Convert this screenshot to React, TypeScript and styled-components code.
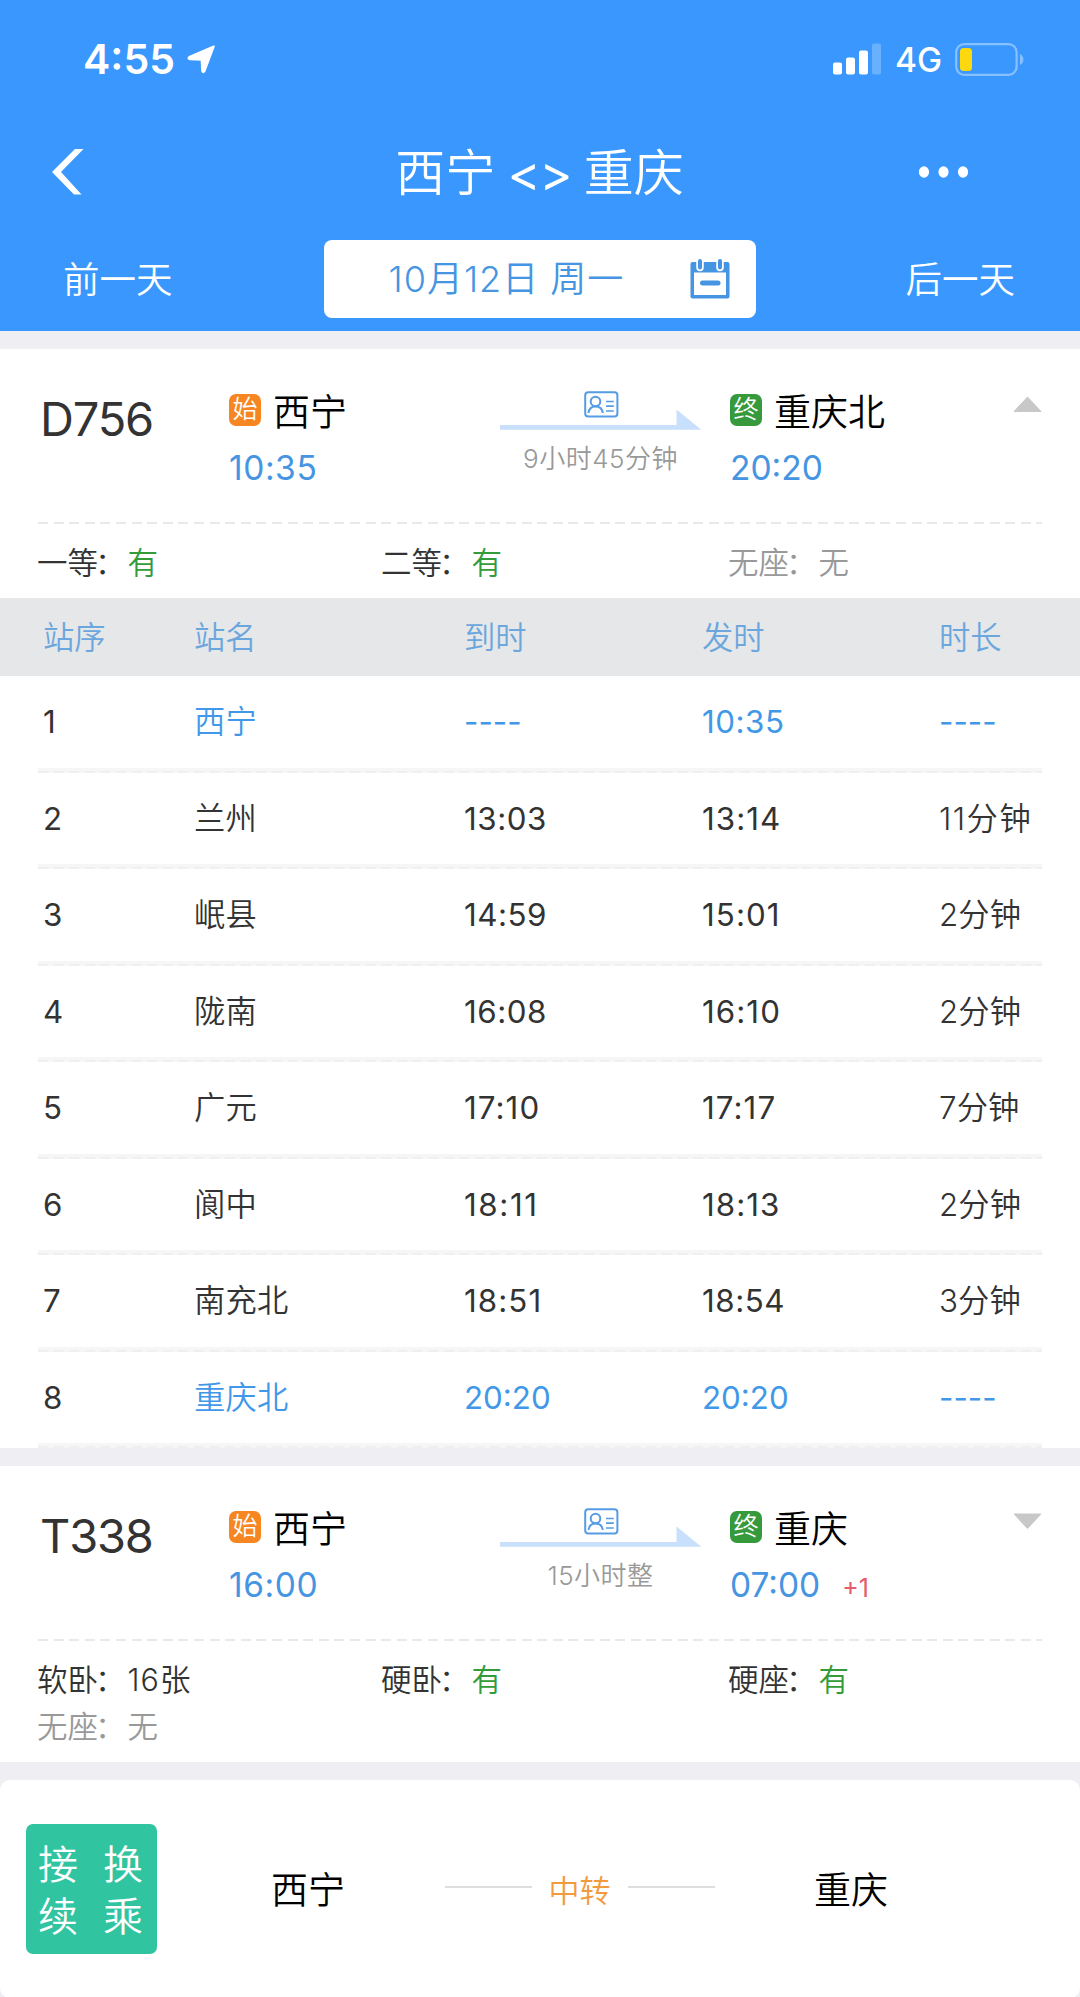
import React from 'react';
import styled, { createGlobalStyle } from 'styled-components';

const GlobalStyle = createGlobalStyle`
  * { box-sizing: border-box; }
  body {
    margin: 0;
    background: #efeff3;
    font-family: Inter, "Noto Sans CJK SC", sans-serif;
    color: #333;
  }
`;

const Screen = styled.div`
  width: 1080px;
  height: 1997px;
  overflow: hidden;
  display: flex;
  flex-direction: column;
  background: #efeff3;
  white-space: nowrap;
`;

const Header = styled.header`
  height: 331px;
  flex: none;
  background: #3997fd;
  color: #fff;
`;

const StatusBar = styled.div`
  height: 118px;
  padding: 0 56px 0 83px;
  display: flex;
  justify-content: space-between;
  align-items: center;
`;

const StatusGroup = styled.div<{ $gap: number }>`
  display: flex;
  align-items: center;
  gap: ${(p) => p.$gap}px;
`;

const Clock = styled.span`
  font-size: 41px;
  font-weight: 580;
  line-height: 48px;
`;

const Network = styled.span`
  width: 47px;
  font-size: 33.5px;
  font-weight: 460;
  line-height: 40px;
  padding-top: 2px;
`;

const NavBar = styled.div`
  height: 108px;
  padding: 0 112px 0 52px;
  display: grid;
  grid-template-columns: 100px 1fr 49px;
  align-items: center;
`;

const Title = styled.h1`
  margin: 0;
  padding: 2px 0 0 8px;
  text-align: center;
  font-size: 50px;
  font-weight: 350;
  line-height: 60px;
`;

const Angle = styled.span`
  margin: 0 -2px;
  font-size: 50px;
  font-weight: 400;
  letter-spacing: -1px;
`;

const DateBar = styled.div`
  height: 105px;
  padding: 14px 65px 0 63px;
  display: flex;
  align-items: flex-start;
  justify-content: space-between;
`;

const DayLink = styled.span`
  font-size: 36.5px;
  font-weight: 350;
  line-height: 80px;
`;

const DateBox = styled.div`
  width: 432px;
  height: 78px;
  margin-left: 1px;
  padding: 0 26px 0 65px;
  border-radius: 8px;
  background: #fff;
  color: #4695e2;
  font-size: 36px;
  font-weight: 360;
  letter-spacing: 1px;
  line-height: 78px;
  display: flex;
  align-items: center;
  justify-content: space-between;
`;

const Card = styled.section`
  margin-top: 18px;
  flex: none;
  background: #fff;
`;

const TrainHead = styled.div`
  height: 173px;
  padding: 40px 38px 0 40px;
  display: grid;
  grid-template-columns: 189px 271px 230px 1fr 29px;
`;

const TrainNo = styled.div`
  padding-top: 4px;
  font-size: 47px;
  line-height: 52px;
  letter-spacing: -1.2px;
`;

const Stop = styled.div`
  display: flex;
  flex-direction: column;
`;

const StopName = styled.div`
  display: flex;
  align-items: center;
  gap: 12px;
  height: 44px;
  padding-top: 3px;
  color: #000;
  font-size: 37px;
  font-weight: 350;
  line-height: 44px;
`;

const Badge = styled.span<{ $color: string }>`
  width: 32px;
  height: 32px;
  margin-top: -6px;
  border-radius: 7px;
  background: ${(p) => p.$color};
  color: #fff;
  font-size: 25px;
  line-height: 31px;
  text-align: center;
`;

const StopTime = styled.div`
  height: 44px;
  margin-top: 13px;
  display: flex;
  align-items: baseline;
  gap: 22px;
  color: #4695e2;
  font-size: 33.5px;
  line-height: 44px;
`;

/* Evens out the narrow figure "1" against the other digits. */
const Figures = styled.span<{ $tracking: number; $latin: boolean }>`
  letter-spacing: ${(p) => p.$tracking}em;
  font-weight: ${(p) => (p.$latin ? 400 : 'inherit')};
`;

const NextDay = styled.span`
  color: #e65c6c;
  font-size: 25px;
`;

const Route = styled.div`
  width: 201px;
  padding-top: 2px;
  display: flex;
  flex-direction: column;
  align-items: center;
`;

const Duration = styled.div`
  margin-top: 11px;
  font-size: 26px;
  font-weight: 360;
  letter-spacing: 0.5px;
  line-height: 34px;
  color: #999;
`;

const CaretSlot = styled.div`
  padding-top: 7px;
`;

const Dashes = styled.div`
  height: 2px;
  margin: 0 38px;
  background: repeating-linear-gradient(90deg, #e9e9e9 0 10px, transparent 10px 15.6px);
`;

const Seats = styled.div`
  padding: 15px 0 12px 37px;
  display: grid;
  grid-template-columns: 344px 347px 1fr;
  grid-auto-rows: 47px;
  font-size: 30.5px;
  font-weight: 350;
  line-height: 47px;
`;

const Seat = styled.div<{ $muted: boolean }>`
  color: ${(p) => (p.$muted ? '#999' : '#333')};
`;

const Colon = styled.span`
  margin: 0 2px 0 -3px;
`;

const Available = styled.span`
  color: #349b3a;
`;

const gridColumns = '151px 270px 238px 237px 1fr';

const TableHead = styled.div`
  height: 78px;
  padding-left: 43px;
  display: grid;
  grid-template-columns: ${gridColumns};
  background: #e6e7e9;
  color: #6ba6dd;
  font-size: 31.3px;
  font-weight: 350;
  line-height: 80px;
`;

const TableRow = styled.div`
  height: 96.5px;
  padding: 0 38px;
  line-height: 93px;
  font-size: 31.3px;
  font-weight: 350;
`;

const Cells = styled.div`
  height: 91.5px;
  margin-right: -38px;
  padding-left: 5px;
  display: grid;
  grid-template-columns: ${gridColumns};
`;

const Cell = styled.span<{ $accent?: boolean }>`
  color: ${(p) => (p.$accent ? '#4198e8' : '#333')};
`;

const RowLine = styled.div`
  height: 5px;
  padding-top: 3px;
  background: #f6f6f6;
`;

const RowDashes = styled(Dashes)`
  margin: 0;
  opacity: 0.5;
`;

const TransferCard = styled(Card)`
  height: 218px;
  padding: 44px 0 0 26px;
  border-radius: 10px;
  display: flex;
  align-items: flex-start;
`;

const TransferTag = styled.div`
  width: 131px;
  height: 130px;
  padding: 15px 0 0 12px;
  border-radius: 7px;
  background: #31c4a0;
  color: #fff;
  display: grid;
  grid-template-columns: 65px 1fr;
  grid-auto-rows: 52px;
  font-size: 40px;
  font-weight: 350;
  line-height: 52px;
`;

const TransferRoute = styled.div`
  height: 128px;
  flex: 1;
  padding: 0 192px 0 114px;
  display: flex;
  align-items: center;
  justify-content: space-between;
  color: #000;
  font-size: 37px;
  font-weight: 350;
`;

const Via = styled.div`
  display: flex;
  align-items: center;
  gap: 17px;
  color: #f19a3e;
  font-size: 31px;
`;

const Rule = styled.span`
  width: 87px;
  height: 2px;
  margin-top: -2px;
  background: #dedede;
`;

const LocationIcon = () => (
  <svg width="29" height="29" viewBox="0 0 29 29">
    <path d="M26.800 1.400 L17.600 26 Q16.200 28.400 15.200 26 L14.600 14.800 L3 14.200 Q0 13.300 2.800 11.700 Z" fill="#fff" stroke="#fff" strokeWidth="2" strokeLinejoin="round" />
  </svg>
);

const SignalIcon = () => (
  <svg width="49" height="32" viewBox="0 0 49 32" fill="#fff">
    <rect x="0" y="19.500" width="9" height="12" rx="2" />
    <rect x="13" y="14.500" width="9" height="17" rx="2" />
    <rect x="26" y="7.500" width="9" height="24" rx="2" />
    <rect x="39" y=".5" width="9" height="31" rx="2" opacity=".25" />
  </svg>
);

const BatteryIcon = () => (
  <svg width="69" height="33" viewBox="0 0 69 33">
    <rect x="1.2" y="1.2" width="60.4" height="30.6" rx="8" fill="none" stroke="#86c1fe" strokeWidth="2.2" />
    <rect x="5" y="5" width="12" height="23" rx="3.5" fill="#fcd80d" />
    <path d="M65 11 Q68.4 13 68.4 16.500 T65 22 Z" fill="#86c1fe" />
  </svg>
);

const BackIcon = () => (
  <svg width="32" height="46" viewBox="0 0 32 46">
    <path d="M23 0 H31.500 L9 23 L29.500 45.500 H22 L0 23 Z" fill="#fff" />
  </svg>
);

const MoreIcon = () => (
  <svg width="49" height="12" viewBox="0 0 49 12" fill="#fff">
    <ellipse cx="5" cy="6" rx="5.100" ry="5.800" />
    <ellipse cx="24.500" cy="6" rx="5.100" ry="5.800" />
    <ellipse cx="44" cy="6" rx="5.100" ry="5.800" />
  </svg>
);

const CalendarIcon = () => (
  <svg width="40" height="40" viewBox="0 0 40 40">
    <rect x=".5" y="3" width="39" height="36.500" rx="2" fill="#4695e2" />
    <rect x="4" y="13.500" width="32" height="22.500" fill="#fff" />
    <path d="M10 3 V8.500 M30 3 V8.500" stroke="#fff" strokeWidth="7.500" strokeLinecap="round" />
    <path d="M10 2 V8.500 M30 2 V8.500" stroke="#4695e2" strokeWidth="4" strokeLinecap="round" />
    <path d="M12.500 24 H28" stroke="#4695e2" strokeWidth="5" strokeLinecap="round" />
  </svg>
);

const RouteArrow = () => (
  <svg width="201" height="40" viewBox="0 0 201 40">
    <g fill="none" stroke="#569ce4" strokeWidth="2">
      <rect x="85.200" y="1.200" width="32.200" height="24.400" rx="3" />
      <circle cx="95.500" cy="10.500" r="4.800" />
      <path d="M88.500 22 C89 17.500 92 15.500 95.500 15.500 S102.300 17.500 102.800 22" />
      <path d="M106 10.500 H113.800 M106 15.200 H113.800 M106 20 H113.800" strokeWidth="1.700" />
    </g>
    <path d="M0 34 H176.500 V18.500 L201.500 38.800 H0 Z" fill="#c8e0fb" />
  </svg>
);

const Caret = ({ open }: { open: boolean }) => (
  <svg width="29" height="17" viewBox="0 0 29 17">
    <path
      d={open ? 'M14.500 1 L28 15.500 H1 Z' : 'M14.500 15.500 L28 1 H1 Z'}
      fill="#c8c8c8"
      stroke="#c8c8c8"
      strokeLinejoin="round"
    />
  </svg>
);

const Fig = ({ children }: { children: string }) => {
  const ones = children.split('1').length - 1;
  const latin = /^[\d:-]+$/.test(children);
  const base = latin ? 0 : 0.005;
  return (
    <Figures $latin={latin} $tracking={base + (ones * 0.085) / children.length}>
      {children}
    </Figures>
  );
};

type SeatInfo = { label: string; value: string };
type TrainProps = {
  no: string;
  from: string;
  depart: string;
  to: string;
  arrive: string;
  nextDay?: string;
  duration: string;
  open: boolean;
  seats: SeatInfo[];
  children?: React.ReactNode;
};

const Train = (t: TrainProps) => (
  <Card>
    <TrainHead>
      <TrainNo>{t.no}</TrainNo>
      <Stop>
        <StopName><Badge $color="#f58622">始</Badge>{t.from}</StopName>
        <StopTime><Fig>{t.depart}</Fig></StopTime>
      </Stop>
      <Route>
        <RouteArrow />
        <Duration>{t.duration}</Duration>
      </Route>
      <Stop>
        <StopName><Badge $color="#369a3c">终</Badge>{t.to}</StopName>
        <StopTime><Fig>{t.arrive}</Fig>{t.nextDay && <NextDay>{t.nextDay}</NextDay>}</StopTime>
      </Stop>
      <CaretSlot><Caret open={t.open} /></CaretSlot>
    </TrainHead>
    <Dashes />
    <Seats>
      {t.seats.map((s) => (
        <Seat key={s.label} $muted={s.value === '无'}>
          {s.label}<Colon>：</Colon>{s.value === '有' ? <Available>有</Available> : <Fig>{s.value}</Fig>}
        </Seat>
      ))}
    </Seats>
    {t.children}
  </Card>
);

const stations = [
  ['西宁', '----', '10:35', '----'],
  ['兰州', '13:03', '13:14', '11分钟'],
  ['岷县', '14:59', '15:01', '2分钟'],
  ['陇南', '16:08', '16:10', '2分钟'],
  ['广元', '17:10', '17:17', '7分钟'],
  ['阆中', '18:11', '18:13', '2分钟'],
  ['南充北', '18:51', '18:54', '3分钟'],
  ['重庆北', '20:20', '20:20', '----'],
];

export default function App() {
  return (
    <Screen>
      <GlobalStyle />
      <Header>
        <StatusBar>
          <StatusGroup $gap={12}><Clock>4:55</Clock><LocationIcon /></StatusGroup>
          <StatusGroup $gap={13}><SignalIcon /><Network>4G</Network><BatteryIcon /></StatusGroup>
        </StatusBar>
        <NavBar>
          <BackIcon />
          <Title>西宁 <Angle>&lt;&gt;</Angle> 重庆</Title>
          <MoreIcon />
        </NavBar>
        <DateBar>
          <DayLink>前一天</DayLink>
          <DateBox>10月12日 周一<CalendarIcon /></DateBox>
          <DayLink>后一天</DayLink>
        </DateBar>
      </Header>
      <Train
        no="D756" from="西宁" depart="10:35" to="重庆北" arrive="20:20" duration="9小时45分钟" open
        seats={[{ label: '一等', value: '有' }, { label: '二等', value: '有' }, { label: '无座', value: '无' }]}
      >
        <TableHead>
          {['站序', '站名', '到时', '发时', '时长'].map((h) => <span key={h}>{h}</span>)}
        </TableHead>
        {stations.map((row, i) => (
          <TableRow key={row[0]}>
            <Cells>
              <Cell><Fig>{String(i + 1)}</Fig></Cell>
              {row.map((text, c) => (
                <Cell key={c} $accent={i === 0 || i === stations.length - 1}><Fig>{text}</Fig></Cell>
              ))}
            </Cells>
            <RowLine><RowDashes /></RowLine>
          </TableRow>
        ))}
      </Train>
      <Train
        no="T338" from="西宁" depart="16:00" to="重庆" arrive="07:00" nextDay="+1" duration="15小时整" open={false}
        seats={[{ label: '软卧', value: '16张' }, { label: '硬卧', value: '有' }, { label: '硬座', value: '有' }, { label: '无座', value: '无' }]}
      />
      <TransferCard>
        <TransferTag><span>接</span><span>换</span><span>续</span><span>乘</span></TransferTag>
        <TransferRoute>
          <span>西宁</span>
          <Via><Rule />中转<Rule /></Via>
          <span>重庆</span>
        </TransferRoute>
      </TransferCard>
    </Screen>
  );
}
